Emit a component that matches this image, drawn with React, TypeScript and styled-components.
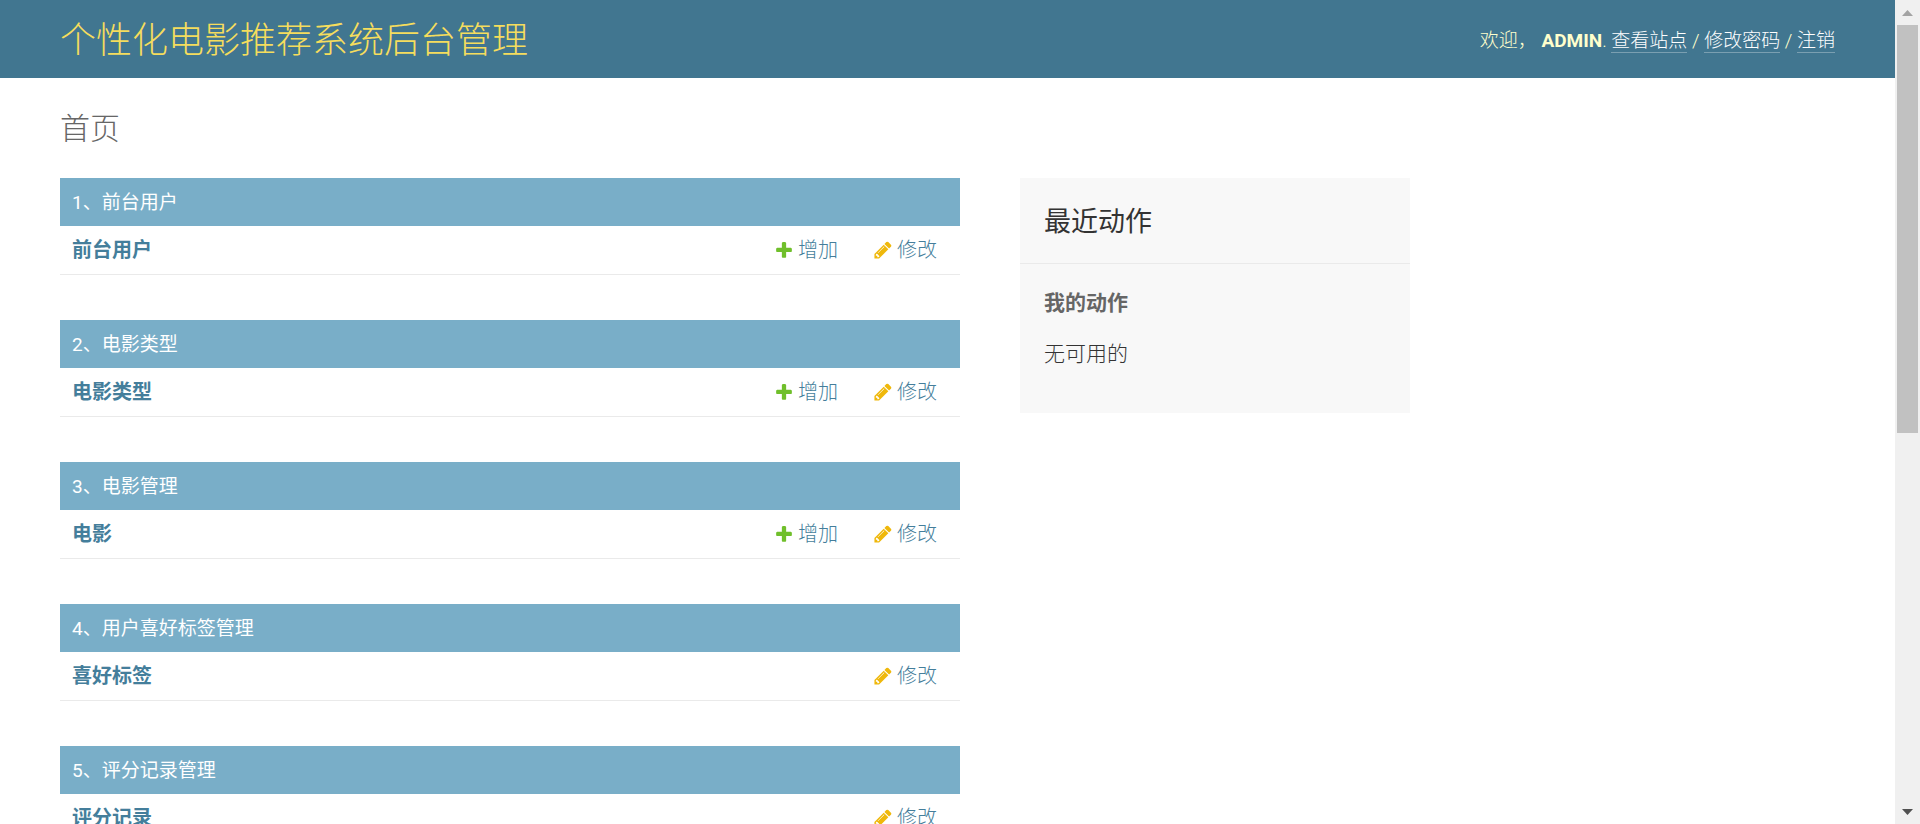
import React from 'react';
import styled, { createGlobalStyle } from 'styled-components';

const GlobalStyle = createGlobalStyle`
  * { box-sizing: border-box; }
  body {
    margin: 0;
    background: #fff;
    color: #333;
    font-family: Roboto, "Noto Sans CJK SC", sans-serif;
    font-size: 21px;
    font-weight: 300;
  }
  a { text-decoration: none; }
`;

const Window = styled.div`
  display: flex;
  height: 100vh;
  overflow: hidden;
`;

const Page = styled.div`
  flex: 1;
  min-width: 0;
  overflow: hidden;
`;

const Header = styled.header`
  display: flex;
  justify-content: space-between;
  align-items: center;
  padding: 17px 60px 13px;
  background: #417690;
`;

const SiteName = styled.h1`
  margin: 0;
  font-size: 36px;
  font-weight: 300;
  line-height: 48px;
  a { color: #f5dd5d; }
`;

const UserTools = styled.nav`
  color: #ffc;
  font-size: 19px;
  line-height: 24px;
  strong { font-weight: 700; }
`;

const UserLink = styled.a`
  color: #fff;
  border-bottom: 1px solid #7a9fb1;
`;

const Content = styled.main`
  padding: 30px 60px;
`;

const PageTitle = styled.h2`
  margin: 0 0 28px;
  color: #666;
  font-size: 30px;
  font-weight: 300;
  line-height: 42px;
`;

const Columns = styled.div`
  display: flex;
  align-items: flex-start;
  gap: 60px;
`;

const ModuleList = styled.div`
  display: flex;
  flex-direction: column;
  gap: 45px;
  flex: 0 1 900px;
`;

const Module = styled.table`
  width: 100%;
  border-collapse: separate;
  border-spacing: 0;
  caption {
    padding: 13px 12px 11px;
    background: #79aec8;
    color: #fff;
    font-size: 19px;
    font-weight: 400;
    line-height: 24px;
    text-align: left;
  }
  caption a { color: #fff; }
`;

const ModelName = styled.th`
  padding: 12px;
  border-bottom: 1px solid #eaeaea;
  font-size: 20px;
  font-weight: 700;
  line-height: 24px;
  text-align: left;
  a { color: #447e9b; }
`;

const ActionCell = styled.td`
  width: 1px;
  padding: 12px 23px 12px 12px;
  border-bottom: 1px solid #eaeaea;
  white-space: nowrap;
`;

const ActionLink = styled.a`
  display: flex;
  align-items: center;
  gap: 4px;
  color: #447e9b;
  font-size: 20px;
  line-height: 24px;
`;

const Sidebar = styled.aside`
  flex: 0 1 390px;
  padding-bottom: 45px;
  background: #f8f8f8;
`;

const SidebarTitle = styled.h2`
  margin: 0 0 24px;
  padding: 26px 24px 22px;
  border-bottom: 1px solid #eaeaea;
  font-size: 27px;
  font-weight: 400;
  line-height: 37px;
`;

const SidebarSubtitle = styled.h3`
  margin: 0 24px 22px;
  color: #666;
  font-size: 21px;
  font-weight: 700;
  line-height: 30px;
`;

const SidebarText = styled.p`
  margin: 0 24px;
  line-height: 28px;
`;

const ScrollBar = styled.div`
  display: flex;
  flex-direction: column;
  flex: 0 0 25px;
  background: #f0f0f0;
`;

const ScrollArrow = styled.button`
  display: flex;
  align-items: center;
  justify-content: center;
  height: 25px;
  padding: 0;
  border: 0;
  background: transparent;
`;

const ScrollThumb = styled.div`
  flex: 408;
  margin: 0 2px;
  background: #c1c1c1;
`;

const ScrollTrack = styled.div`
  flex: 366;
`;

const AddIcon = () => (
  <svg width="20" height="20" viewBox="0 0 1792 1792" aria-hidden="true">
    <path
      fill="#70bf2b"
      d="M1600 796v192q0 40-28 68t-68 28h-416v416q0 40-28 68t-68 28h-192q-40 0-68-28t-28-68v-416h-416q-40 0-68-28t-28-68v-192q0-40 28-68t68-28h416v-416q0-40 28-68t68-28h192q40 0 68 28t28 68v416h416q40 0 68 28t28 68z"
    />
  </svg>
);

const ChangeIcon = () => (
  <svg width="20" height="20" viewBox="0 0 1792 1792" aria-hidden="true">
    <path
      fill="#efb80b"
      d="M491 1536l91-91-235-235-91 91v107h128v128h107zm523-928q0-22-22-22-10 0-17 7l-542 542q-7 7-7 17 0 22 22 22 10 0 17-7l542-542q7-7 7-17zm-54-192l416 416-832 832h-416v-416zm683 96q0 53-37 90l-166 166-416-416 166-165q36-38 90-38 53 0 91 38l235 234q37 39 37 91z"
    />
  </svg>
);

type AdminModule = { title: string; model: string; canAdd: boolean };

const modules: AdminModule[] = [
  { title: '1、前台用户', model: '前台用户', canAdd: true },
  { title: '2、电影类型', model: '电影类型', canAdd: true },
  { title: '3、电影管理', model: '电影', canAdd: true },
  { title: '4、用户喜好标签管理', model: '喜好标签', canAdd: false },
  { title: '5、评分记录管理', model: '评分记录', canAdd: false },
];

export default function App() {
  return (
    <Window lang="zh-CN">
      <GlobalStyle />
      <Page>
        <Header>
          <SiteName><a href="#home">个性化电影推荐系统后台管理</a></SiteName>
          <UserTools>
            欢迎， <strong>ADMIN</strong>. <UserLink href="#site">查看站点</UserLink>
            {' / '}
            <UserLink href="#password">修改密码</UserLink>
            {' / '}
            <UserLink href="#logout">注销</UserLink>
          </UserTools>
        </Header>
        <Content>
          <PageTitle>首页</PageTitle>
          <Columns>
            <ModuleList>
              {modules.map(({ title, model, canAdd }) => (
                <Module key={title}>
                  <caption><a href="#app">{title}</a></caption>
                  <tbody>
                    <tr>
                      <ModelName scope="row"><a href="#model">{model}</a></ModelName>
                      <ActionCell>
                        {canAdd && <ActionLink href="#add"><AddIcon />增加</ActionLink>}
                      </ActionCell>
                      <ActionCell>
                        <ActionLink href="#change"><ChangeIcon />修改</ActionLink>
                      </ActionCell>
                    </tr>
                  </tbody>
                </Module>
              ))}
            </ModuleList>
            <Sidebar>
              <SidebarTitle>最近动作</SidebarTitle>
              <SidebarSubtitle>我的动作</SidebarSubtitle>
              <SidebarText>无可用的</SidebarText>
            </Sidebar>
          </Columns>
        </Content>
      </Page>
      <ScrollBar>
        <ScrollArrow aria-label="向上滚动">
          <svg width="11" height="6" viewBox="0 0 11 6"><path fill="#a3a3a3" d="M0 6 5.5 0 11 6z" /></svg>
        </ScrollArrow>
        <ScrollThumb />
        <ScrollTrack />
        <ScrollArrow aria-label="向下滚动">
          <svg width="11" height="6" viewBox="0 0 11 6"><path fill="#505050" d="M0 0 5.5 6 11 0z" /></svg>
        </ScrollArrow>
      </ScrollBar>
    </Window>
  );
}
